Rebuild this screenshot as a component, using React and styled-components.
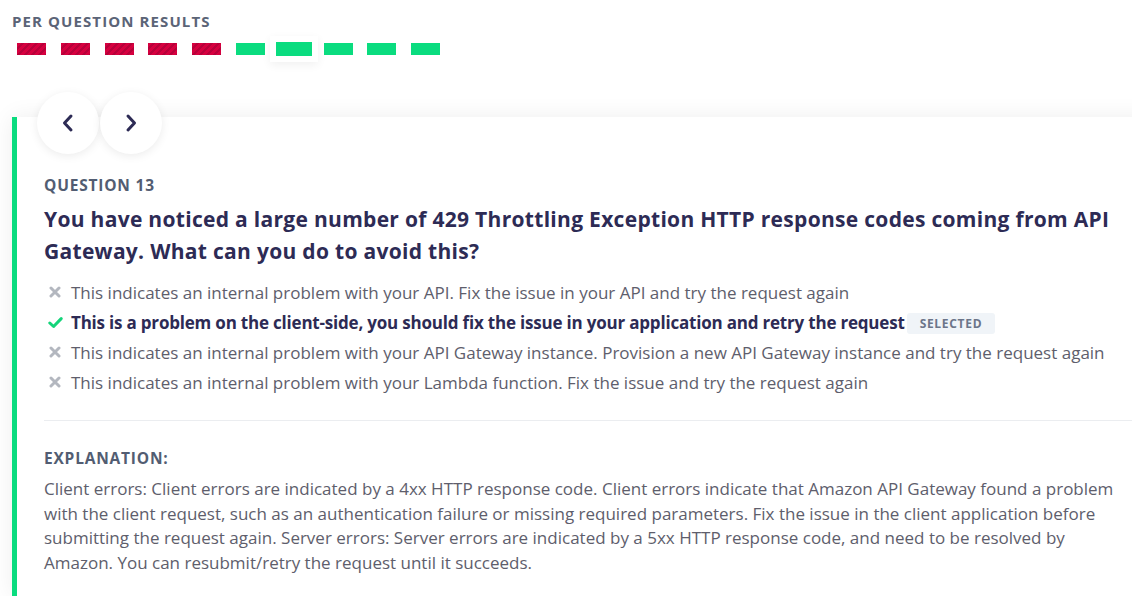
import React from "react"
import styled, { createGlobalStyle } from "styled-components"

const results = [false, false, false, false, false, true, true, true, true, true]
const current = 6

const options = [
  { text: "This indicates an internal problem with your API. Fix the issue in your API and try the request again" },
  {
    text: "This is a problem on the client-side, you should fix the issue in your application and retry the request",
    correct: true,
    selected: true
  },
  {
    text: "This indicates an internal problem with your API Gateway instance. Provision a new API Gateway instance and try the request again"
  },
  { text: "This indicates an internal problem with your Lambda function. Fix the issue and try the request again" }
]

const explanation =
  "Client errors: Client errors are indicated by a 4xx HTTP response code. Client errors indicate that Amazon API Gateway found a problem with the client request, such as an authentication failure or missing required parameters. Fix the issue in the client application before submitting the request again. Server errors: Server errors are indicated by a 5xx HTTP response code, and need to be resolved by Amazon. You can resubmit/retry the request until it succeeds."

const Chevron = ({ dir }) => (
  <svg width="14" height="20" viewBox="0 0 14 20">
    <path
      d={dir === "left" ? "M10 3 L3.5 10 L10 17" : "M4 3 L10.5 10 L4 17"}
      fill="none"
      stroke="#2d2b55"
      strokeWidth="3"
      strokeLinecap="round"
      strokeLinejoin="round"
    />
  </svg>
)

const Cross = () => (
  <svg width="12" height="12" viewBox="0 0 12 12">
    <path d="M2 2 L10 10 M10 2 L2 10" stroke="#b3b7bf" strokeWidth="3" strokeLinecap="round" />
  </svg>
)

const Check = () => (
  <svg width="15" height="13" viewBox="0 0 15 13">
    <path
      d="M1.8 7 L5.6 10.5 L13.2 2.6"
      fill="none"
      stroke="#14d47a"
      strokeWidth="3"
      strokeLinecap="round"
      strokeLinejoin="round"
    />
  </svg>
)

export default function App() {
  return (
    <>
      <GlobalStyle />
      <Page>
        <SectionTitle>Per Question Results</SectionTitle>
        <Bars>
          {results.map((ok, i) => (
            <Bar key={i} ok={ok} selected={i === current} />
          ))}
        </Bars>
        <Card>
          <Nav>
            <NavButton>
              <Chevron dir="left" />
            </NavButton>
            <NavButton>
              <Chevron dir="right" />
            </NavButton>
          </Nav>
          <Label>Question 13</Label>
          <Question>
            You have noticed a large number of 429 Throttling Exception HTTP response codes coming from API Gateway.
            What can you do to avoid this?
          </Question>
          <Options>
            {options.map((o, i) => (
              <Option key={i} correct={o.correct}>
                <IconBox correct={o.correct}>{o.correct ? <Check /> : <Cross />}</IconBox>
                <span>
                  {o.text}
                  {o.selected && <Badge>Selected</Badge>}
                </span>
              </Option>
            ))}
          </Options>
          <Divider />
          <Label as="h4" spaced>
            Explanation:
          </Label>
          <Explanation>{explanation}</Explanation>
        </Card>
      </Page>
    </>
  )
}

const GlobalStyle = createGlobalStyle`
  body {
    margin: 0;
    background: #fff;
    font-family: "Open Sans", "Noto Sans", sans-serif;
    overflow: hidden;
  }
`

const Page = styled.div`
  padding: 12px 0 0 12px;
`

const SectionTitle = styled.h3`
  margin: 0;
  font-size: 15px;
  line-height: 18px;
  font-weight: 700;
  text-transform: uppercase;
  letter-spacing: 1.1px;
  color: #5b6477;
`

const Bars = styled.div`
  display: flex;
  align-items: center;
  gap: 14.8px;
  height: 14px;
  margin: 12px 0 0 5px;
`

const Bar = styled.div`
  width: ${p => (p.selected ? "36px" : "29px")};
  height: ${p => (p.selected ? "14px" : "12px")};
  margin: ${p => (p.selected ? "0 -3.5px" : "0")};
  background: ${p =>
    p.ok
      ? "#0adc7f"
      : "repeating-linear-gradient(135deg, #d6003f 0 3px, #b8003a 3px 5px)"};
  box-shadow: ${p => (p.selected ? "0 0 0 6px #fff, 0 3px 10px 6px rgba(0, 0, 0, 0.06)" : "none")};
`

const Card = styled.div`
  display: flow-root;
  margin-top: 61px;
  width: 1140px;
  min-height: 479px;
  box-sizing: border-box;
  border-left: 5px solid #0adc7f;
  background: #fff;
  padding: 0 0 0 27px;
  box-shadow: 0 0 22px rgba(0, 0, 0, 0.07);
`

const Nav = styled.div`
  display: flex;
  gap: 1px;
  margin: -25px 0 0 -7px;
`

const NavButton = styled.button`
  width: 62px;
  height: 62px;
  border: 0;
  border-radius: 50%;
  background: #fff;
  display: flex;
  align-items: center;
  justify-content: center;
  padding: 0;
  box-shadow: 0 2px 10px rgba(0, 0, 0, 0.08);
`

const Label = styled.h4`
  margin: ${p => (p.spaced ? "27px" : "21px")} 0 0;
  font-size: 15.5px;
  line-height: 20px;
  font-weight: 700;
  text-transform: uppercase;
  letter-spacing: 0.8px;
  color: #525d72;
`

const Question = styled.h2`
  margin: 8px 0 0;
  font-size: 21px;
  line-height: 32px;
  font-weight: 700;
  letter-spacing: 0.3px;
  color: #2d2b55;
  padding-right: 14px;
`

const Options = styled.ul`
  list-style: none;
  margin: 10px 0 0;
  padding: 0;
`

const Option = styled.li`
  display: flex;
  align-items: center;
  height: 30px;
  font-size: 17px;
  color: ${p => (p.correct ? "#2d2b55" : "#5e5e6c")};
  font-weight: ${p => (p.correct ? 700 : 400)};
  letter-spacing: ${p => (p.correct ? "-0.2px" : "0")};
`

const IconBox = styled.span`
  width: 27px;
  flex: none;
  display: flex;
  padding-left: ${p => (p.correct ? "4px" : "5px")};
  box-sizing: border-box;
`

const Badge = styled.span`
  display: inline-block;
  margin-left: 2px;
  padding: 2px 13px;
  background: #f0f4f8;
  border-radius: 3px;
  color: #6c7589;
  font-size: 12px;
  line-height: 17px;
  font-weight: 700;
  letter-spacing: 0.7px;
  text-transform: uppercase;
  vertical-align: 1px;
`

const Divider = styled.hr`
  border: 0;
  border-top: 1px solid #ebedf0;
  margin: 23px 15px 0 0;
`

const Explanation = styled.p`
  margin: 9px 0 0;
  padding-right: 36px;
  font-size: 17px;
  line-height: 24.7px;
  color: #5e5e6c;
`
